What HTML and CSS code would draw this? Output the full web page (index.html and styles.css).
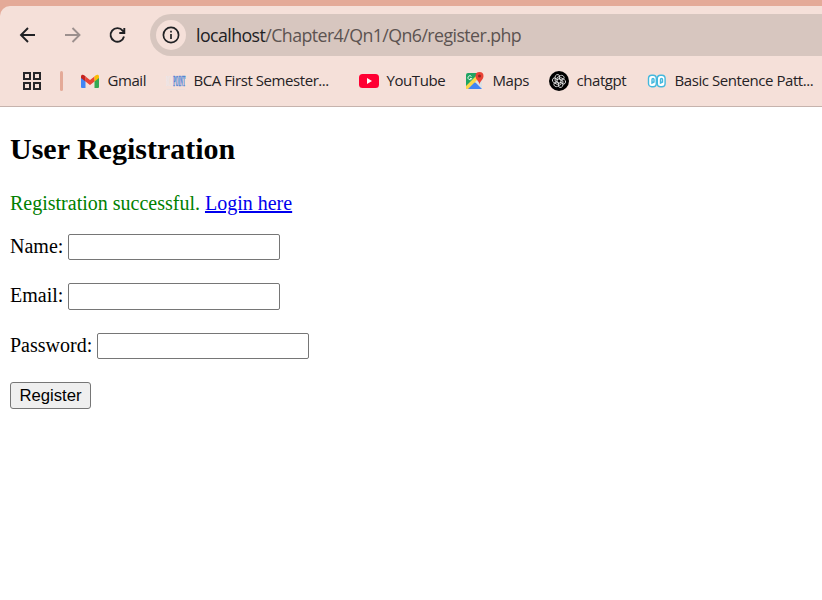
FILE: index.html
```html
<!DOCTYPE html>
<html lang="en">
<head>
<meta charset="utf-8">
<title>User Registration</title>
<link rel="stylesheet" href="styles.css">
</head>
<body>
<header class="browser">
  <div class="chrome">
    <nav class="toolbar">
      <svg class="nav" viewBox="0 0 20 20"><path d="M17 10H3.3M10 3L3 10l7 7"/></svg>
      <svg class="nav forward" viewBox="0 0 20 20"><path d="M2 10h14.200M9.500 3l7 7-7 7"/></svg>
      <svg class="nav" viewBox="0 0 20 20"><path d="M16 11.500A6.800 6.800 0 1 1 14.800 5.800L16.500 7.500M16.300 3v5h-5"/></svg>
      <div class="address">
        <span class="info"><svg viewBox="0 0 18 18"><circle cx="9" cy="9" r="7.6"/><path d="M9 8v5M9 4.8v1.8"/></svg></span>
        <span class="url"><b>localhost</b>/Chapter4/Qn1/Qn6/register.php</span>
      </div>
    </nav>
    <div class="bookmarks">
      <svg class="apps" viewBox="0 0 18 18"><path d="M1 1h6v6H1zM11 1h6v6h-6zM1 11h6v6H1zM11 11h6v6h-6z"/></svg>
      <i class="divider"></i>
      <a class="mark gmail"><svg viewBox="-1 0 20 20"><path fill="#4285f4" d="M0 6l4.500 3v8H1q-1 0-1-1z"/><path fill="#34a853" d="M13.500 9L18 6v10q0 1-1 1h-3.500z"/><path fill="#ea4335" d="M4.500 5.500L9 9l4.500-3.500v5L9 14l-4.500-3.500z"/><path fill="#c5221f" d="M0 5.500C0 3.500 2 3 3.500 4.500l1 1v5L0 7z"/><path fill="#fbbc04" d="M13.500 5.500l1-1C16 3 18 3.500 18 5.500V7l-4.500 3.500z"/></svg><span>Gmail</span></a>
      <a class="mark bca"><svg viewBox="0 0 20 20"><g class="logo-text"><text transform="translate(0 15) scale(.23 1)" fill="#e9e6ea">BCA</text><text transform="translate(7.200 15) scale(.27 1)" fill="#4f84d6" stroke="#4f84d6" stroke-width=".6">POINT</text></g><path d="M1 18.500h18" stroke="#eadfdd"/></svg><span>BCA First Semester...</span></a>
      <a class="mark youtube"><svg viewBox="0 0 20 20"><rect y="3" width="20" height="14" rx="3.500" fill="#ff0033"/><path d="M8 7l5 3-5 3z" fill="#fff"/></svg><span>YouTube</span></a>
      <a class="mark maps"><svg viewBox="0 0 20 20"><path fill="#1fa463" d="M1 4q0-2 2-2h12L1 17z"/><path fill="#fbd74b" d="M1 15L14 2l3 3L4 18H1z"/><path fill="#dce2e5" d="M10 11l4-4 3 3v8z"/><path fill="#4285f4" d="M3 18l6-6q1-1 2 0l6 6z"/><path fill="#e94235" d="M14.500 14c0-4-4-5-4-9a4 4 0 0 1 8 0c0 4-4 5-4 9z"/><circle cx="14.500" cy="5" r="1.500" fill="#8e2923"/><path fill="none" stroke="#e6f4e8" d="M6.500 5.500a2 2 0 1 0 .3 2H5"/></svg><span>Maps</span></a>
      <a class="mark chatgpt"><svg viewBox="0 0 20 20"><circle cx="10" cy="10" r="10"/><g fill="none" stroke="#eee" stroke-width=".8"><path id="petal" d="M8 11.200V6.700l3.400-2a2.500 2.500 0 0 1 3.700 2.800L11.500 9.600"/><use href="#petal" transform="rotate(60 10 10)"/><use href="#petal" transform="rotate(120 10 10)"/><use href="#petal" transform="rotate(180 10 10)"/><use href="#petal" transform="rotate(240 10 10)"/><use href="#petal" transform="rotate(300 10 10)"/></g></svg><span>chatgpt</span></a>
      <a class="mark sentence"><svg viewBox="0 0 20 20"><g fill="#fff" stroke="#44b8dd" stroke-width="1.400"><rect x="1.500" y="4.200" width="7.800" height="11.500" rx="3.200"/><rect x="10.300" y="4.200" width="7.800" height="11.500" rx="3.200"/><path fill="none" d="M5 8.500q0-1 1-1t1 1v2.500l-2 1zM13.500 8.500q0-1 1-1t1 1v2.500l-2 1z"/></g></svg><span>Basic Sentence Patt...</span></a>
    </div>
  </div>
</header>
<main class="page">
  <h2>User Registration</h2>
  <p class="success">Registration successful. <a href="#">Login here</a></p>
  <form>
    <div class="field"><label for="name">Name:</label><input id="name" type="text"></div>
    <div class="field email"><label for="email">Email:</label><input id="email" type="email"></div>
    <div class="field"><label for="password">Password:</label><input id="password" type="password"></div>
    <button type="button">Register</button>
  </form>
</main>
</body>
</html>
```
FILE: styles.css
```css
* { box-sizing: border-box; }
body { margin: 0; background: #fff; color: #000; font-family: "Liberation Serif", serif; font-size: 20px; overflow: hidden; }
.browser { height: 107px; padding-top: 6px; background: #e4aa98; font-family: "Open Sans", sans-serif; }
.chrome { height: 101px; padding-top: 8px; background: #f5e0d9; border-top-left-radius: 10px; border-bottom: 1px solid #c6b3ad; }
.toolbar { display: flex; align-items: center; height: 42px; padding-left: 18px; }
.nav { width: 20px; height: 20px; margin: 0 25px 1px 0; fill: none; stroke: #202124; stroke-width: 1.9; flex: none; }
.forward { stroke: #9c908e; }
.address { display: flex; align-items: center; flex: 1; height: 42px; margin-left: -3px; padding-left: 6px; border-radius: 21px 0 0 21px; background: #d7c6bf; }
.info { display: grid; place-items: center; width: 30px; height: 30px; border-radius: 50%; background: #f5e0d9; }
.info svg { width: 18px; height: 18px; fill: none; stroke: #202124; stroke-width: 1.7; }
.url { margin-left: 10px; font-size: 17.8px; line-height: 42px; color: #5c5351; letter-spacing: -.58px; white-space: nowrap; }
.url b { font-weight: 400; color: #202124; }
.bookmarks { display: flex; align-items: center; height: 50px; padding-left: 23px; }
.apps { width: 18px; height: 18px; margin-right: 19px; fill: none; stroke: #27272a; stroke-width: 2; flex: none; }
.divider { width: 3px; height: 20px; margin-right: 17px; border-radius: 2px; background: #e4aa98; flex: none; }
.mark { display: flex; align-items: center; height: 24px; flex: none; }
.mark svg { width: 20px; height: 20px; margin-right: 7.500px; flex: none; }
.mark span { padding-bottom: 2px; font-size: 15px; line-height: 22px; color: #252225; white-space: nowrap; letter-spacing: -.43px; }
.gmail { width: 86px; }
.bca { width: 193px; }
.youtube { width: 106px; }
.maps { width: 84px; }
.chatgpt { width: 98px; }
.logo-text { font: bold 14px "Liberation Serif", serif; }
.page { padding: 0 10px; }
h2 { height: 35px; margin: 24px 0 0; font-size: 30px; line-height: 35px; }
.success { height: 23px; margin: 26px 0 19px; line-height: 23px; color: green; }
.success a { color: #00e; }
.field { display: flex; align-items: flex-start; height: 49px; }
.field.email { height: 50px; }
.field label { line-height: 24px; margin-right: 5px; }
.field input { width: 212px; height: 26px; margin: 0; padding: 0 4px; border: 1px solid #767676; border-radius: 2px; background: #fff; }
.email input { height: 27px; }
button { display: block; width: 81px; height: 27px; padding: 0; border: 1px solid #767676; border-radius: 3px; background: #efefef; color: #000; font: 16.700px/24px "Liberation Sans", sans-serif; }
```
